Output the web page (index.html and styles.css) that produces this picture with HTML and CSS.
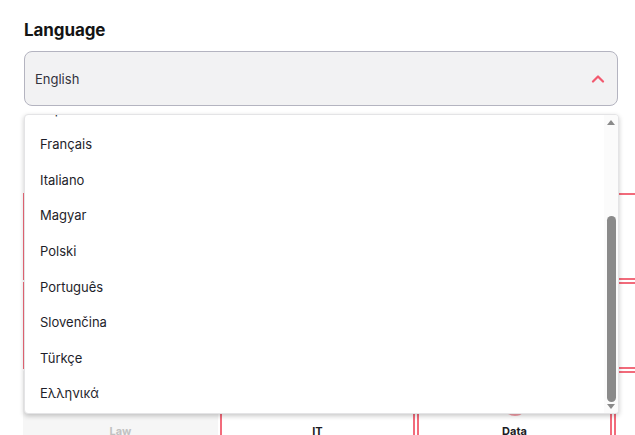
FILE: index.html
```html
<!DOCTYPE html>
<html lang="en">
<head>
<meta charset="utf-8">
<title>Language</title>
<link rel="stylesheet" href="styles.css">
</head>
<body>
<div class="page">
  <h2 class="title">Language</h2>
  <div class="field">
    <div class="select">
      <span class="select-value">English</span>
      <svg class="chev" width="14" height="9" viewBox="0 0 14 9"><path d="M2 7.5 L7 2.5 L12 7.5" fill="none" stroke="#f2596e" stroke-width="2.2" stroke-linecap="round" stroke-linejoin="round"/></svg>
    </div>
    <div class="menu">
      <div class="menu-list">
        <ul class="options">
          <li>Español</li>
          <li>Français</li>
          <li>Italiano</li>
          <li>Magyar</li>
          <li>Polski</li>
          <li>Português</li>
          <li>Slovenčina</li>
          <li>Türkçe</li>
          <li>Ελληνικά</li>
        </ul>
      </div>
      <div class="scrollbar">
        <span class="arrow up"></span>
        <div class="track"><div class="thumb"></div></div>
        <span class="arrow down"></span>
      </div>
    </div>
  </div>

  <div class="grid">
    <div class="card sel"></div>
    <div class="card"></div>
    <div class="card"></div>
    <div class="card sel"></div>

    <div class="card sel"></div>
    <div class="card"></div>
    <div class="card"></div>
    <div class="card sel"></div>

    <div class="card off"><span class="label">Law</span></div>
    <div class="card sel"><span class="label">IT</span></div>
    <div class="card sel"><span class="icon"></span><span class="label">Data</span></div>
    <div class="card sel"></div>
  </div>
</div>
</body>
</html>
```
FILE: styles.css
```css
html, body {
  margin: 0;
  padding: 0;
  background: #ffffff;
  overflow: hidden;
  width: 635px;
  height: 435px;
}
body {
  font-family: "Inter", "Noto Sans", "Liberation Sans", sans-serif;
  color: #1c1c28;
}
.page {
  padding: 19px 17px 0 24px;
}
.title {
  margin: 0;
  font-size: 17px;
  font-weight: 700;
  line-height: 22px;
  color: #141414;
  letter-spacing: -0.1px;
}
.field {
  position: relative;
  margin-top: 10px;
}
.select {
  box-sizing: border-box;
  height: 55px;
  border: 1px solid #b4b4c0;
  border-radius: 8px;
  background: #f2f2f3;
  display: flex;
  align-items: center;
  justify-content: space-between;
  padding: 0 12px 0 10px;
}
.select-value {
  font-size: 13px;
  color: #33333d;
}
.chev {
  display: block;
  margin-top: -1px;
}
.menu {
  position: absolute;
  top: 63px;
  left: 0;
  width: 595px;
  height: 300px;
  box-sizing: border-box;
  background: #ffffff;
  border: 1px solid #e4e4e6;
  border-radius: 4px;
  box-shadow: 0 2px 5px rgba(0, 0, 0, 0.22);
  z-index: 10;
  display: flex;
  overflow: hidden;
}
.menu-list {
  flex: 1;
  overflow: hidden;
}
.options {
  list-style: none;
  margin: -23.3px 0 0 0;
  padding: 0;
}
.options li {
  height: 35.6px;
  line-height: 35.6px;
  padding-left: 15px;
  font-size: 13px;
  color: #1e1e2a;
}
.scrollbar {
  width: 14px;
  display: flex;
  flex-direction: column;
  align-items: center;
  background: #fbfbfb;
  padding: 5px 0 4px;
  box-sizing: border-box;
}
.arrow {
  width: 0;
  height: 0;
  border-left: 4.5px solid transparent;
  border-right: 4.5px solid transparent;
}
.arrow.up {
  border-bottom: 5px solid #8a8a8a;
}
.arrow.down {
  border-top: 5px solid #8a8a8a;
}
.track {
  flex: 1;
  width: 9px;
  display: flex;
  flex-direction: column;
  justify-content: flex-end;
  padding: 4px 0 2px;
}
.thumb {
  height: 186px;
  background: #8a8a8a;
  border-radius: 5px;
}
.grid {
  margin-top: 87px;
  display: grid;
  grid-template-columns: repeat(4, 195px);
  grid-auto-rows: 87px;
  gap: 2px;
  margin-left: -1px;
}
.card {
  box-sizing: border-box;
  border: 2px solid transparent;
  background: #ffffff;
  display: flex;
  flex-direction: column;
  align-items: center;
  justify-content: flex-end;
  padding-bottom: 18px;
}
.card.sel {
  border-color: #f26b7b;
}
.card.off {
  background: #f6f6f6;
}
.label {
  font-size: 11px;
  font-weight: 700;
  color: #1c1c24;
  line-height: 14px;
}
.card.off .label {
  color: #c2c2c2;
}
.icon {
  width: 24px;
  height: 24px;
  border-radius: 50%;
  border: 2px solid #f7a0aa;
  box-sizing: border-box;
  margin-bottom: 8px;
}
```
